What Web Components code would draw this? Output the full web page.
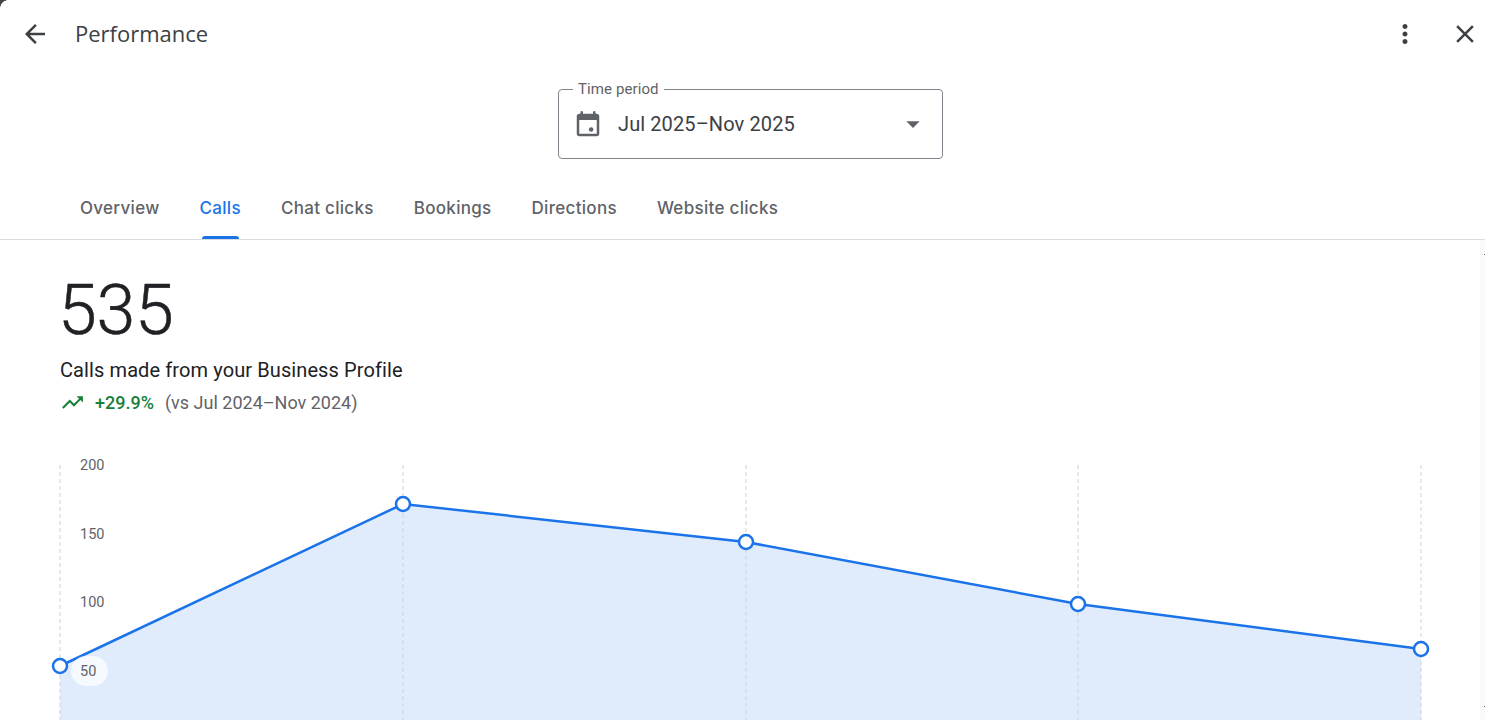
<!DOCTYPE html>
<html lang="en">
<head>
<meta charset="utf-8">
<title>Performance</title>
<style>
  html, body { margin: 0; padding: 0; background: #fff; overflow: hidden; height: 720px; }
  body { font-family: Roboto, "Liberation Sans", sans-serif; }
</style>
</head>
<body>
<perf-dialog>
  <perf-header title="Performance"></perf-header>
  <period-select label="Time period" value="Jul 2025–Nov 2025"></period-select>
  <perf-tabs>
    <perf-tab>Overview</perf-tab>
    <perf-tab active>Calls</perf-tab>
    <perf-tab>Chat clicks</perf-tab>
    <perf-tab>Bookings</perf-tab>
    <perf-tab>Directions</perf-tab>
    <perf-tab>Website clicks</perf-tab>
  </perf-tabs>
  <perf-summary value="535" caption="Calls made from your Business Profile" change="+29.9%" compare="(vs Jul 2024–Nov 2024)"></perf-summary>
  <perf-chart></perf-chart>
</perf-dialog>

<script>
'use strict';

class PerfDialog extends HTMLElement {
  connectedCallback() {
    this.attachShadow({mode: 'open'});
    this.shadowRoot.innerHTML = `
      <style>
        :host {
          display: flex;
          flex-direction: column;
          height: 720px;
          overflow: hidden;
          position: relative;
          background: #fff;
        }
        .corner {
          position: absolute;
          top: 0;
          left: 0;
          width: 8px;
          height: 8px;
          background: radial-gradient(circle at 8px 8px, transparent 7.5px, #444 8px);
        }
        .gutter {
          position: absolute;
          top: 240px;
          right: 0;
          bottom: 0;
          width: 5px;
          background: #fafafa;
        }
        .tick {
          position: absolute;
          right: 0;
          width: 1px;
          height: 1px;
          background: #5f6368;
        }
      </style>
      <slot></slot>
      <div class="corner"></div>
      <div class="gutter"></div>
      <div class="tick" style="top: 254px"></div>
      <div class="tick" style="top: 706px"></div>
    `;
  }
}

class PerfHeader extends HTMLElement {
  connectedCallback() {
    let title = this.getAttribute('title') || '';
    this.attachShadow({mode: 'open'});
    this.shadowRoot.innerHTML = `
      <style>
        :host {
          display: flex;
          align-items: center;
          height: 68px;
          padding: 0 5px 0 20px;
          color: #3c4043;
        }
        .title {
          margin: -2px 0 0 25px;
          font: 400 22px/28px "Open Sans", Roboto, sans-serif;
          flex: 1;
        }
        svg { display: block; fill: #3c4043; }
        .more { margin-right: 30px; }
      </style>
      <svg width="30" height="30" viewBox="0 0 24 24"><path d="M20 11H7.83l5.59-5.59L12 4l-8 8 8 8 1.41-1.41L7.83 13H20v-2z"/></svg>
      <div class="title">${title}</div>
      <svg class="more" width="30" height="30" viewBox="0 0 24 24"><path d="M12 8c1.1 0 2-.9 2-2s-.9-2-2-2-2 .9-2 2 .9 2 2 2zm0 2c-1.1 0-2 .9-2 2s.9 2 2 2 2-.9 2-2-.9-2-2-2zm0 6c-1.1 0-2 .9-2 2s.9 2 2 2 2-.9 2-2-.9-2-2-2z"/></svg>
      <svg width="30" height="30" viewBox="0 0 24 24"><path d="M19 6.41 17.59 5 12 10.59 6.41 5 5 6.41 10.59 12 5 17.59 6.41 19 12 13.41 17.59 19 19 17.59 13.41 12z"/></svg>
    `;
  }
}

class PeriodSelect extends HTMLElement {
  connectedCallback() {
    let label = this.getAttribute('label');
    let value = this.getAttribute('value');
    this.attachShadow({mode: 'open'});
    this.shadowRoot.innerHTML = `
      <style>
        :host {
          display: flex;
          justify-content: center;
          padding: 21px 0 31px 16px;
        }
        .box {
          position: relative;
          box-sizing: border-box;
          width: 385px;
          height: 70px;
          border: 1px solid #80868b;
          border-radius: 4px;
          display: flex;
          align-items: center;
          padding: 0 14px;
          color: #3c4043;
        }
        .label {
          position: absolute;
          top: -10px;
          left: 14px;
          padding: 0 5px;
          background: #fff;
          font: 400 15px/18px Roboto, sans-serif;
          letter-spacing: 0.1px;
          color: #5f6368;
        }
        .value {
          flex: 1;
          margin-left: 15px;
          font: 400 20px/24px Roboto, sans-serif;
          letter-spacing: 0.1px;
        }
        svg { display: block; fill: #5f6368; }
        .calendar { margin-top: 2px; }
        .caret { margin-right: -1px; }
      </style>
      <div class="box">
        <span class="label">${label}</span>
        <svg class="calendar" width="30" height="30" viewBox="0 0 24 24"><path d="M19 3h-1V1h-2v2H8V1H6v2H5c-1.11 0-2 .9-2 2v14c0 1.1.89 2 2 2h14c1.1 0 2-.9 2-2V5c0-1.1-.9-2-2-2zm0 16H5V8h14v11z"/><circle cx="14.5" cy="15.5" r="1.8"/><path d="M4 4h16v4H4z"/></svg>
        <span class="value">${value}</span>
        <svg class="caret" width="32" height="32" viewBox="0 0 24 24"><path d="M7 10l5 5 5-5z"/></svg>
      </div>
    `;
  }
}

class PerfTabs extends HTMLElement {
  connectedCallback() {
    this.attachShadow({mode: 'open'});
    this.shadowRoot.innerHTML = `
      <style>
        :host {
          display: flex;
          height: 50px;
          box-sizing: border-box;
          padding-left: 60px;
          border-bottom: 1px solid #dadce0;
          flex: none;
        }
      </style>
      <slot></slot>
    `;
  }
}

class PerfTab extends HTMLElement {
  connectedCallback() {
    let active = this.hasAttribute('active');
    this.attachShadow({mode: 'open'});
    this.shadowRoot.innerHTML = `
      <style>
        :host {
          display: flex;
          position: relative;
          justify-content: center;
          padding: 0 20px;
          font: 500 17px/24px Inter, Roboto, sans-serif;
          letter-spacing: 0.3px;
          color: ${active ? '#1a73e8' : '#5f6368'};
        }
        .text { margin-top: 6px; }
        .bar {
          position: absolute;
          left: 22px;
          right: 22px;
          bottom: 0;
          height: 3px;
          border-radius: 3px 3px 0 0;
          background: #1a73e8;
        }
      </style>
      <span class="text"><slot></slot></span>
      ${active ? '<span class="bar"></span>' : ''}
    `;
  }
}

class PerfSummary extends HTMLElement {
  connectedCallback() {
    this.attachShadow({mode: 'open'});
    this.shadowRoot.innerHTML = `
      <style>
        :host {
          display: block;
          padding: 28px 0 0 60px;
          color: #202124;
          font-family: Roboto, sans-serif;
        }
        .value {
          font-size: 70px;
          line-height: 84px;
          font-weight: 300;
          margin-left: -2px;
          letter-spacing: -0.3px;
          -webkit-text-stroke: 0.5px #202124;
        }
        .caption { margin-top: 4px; font-size: 20px; line-height: 28px; letter-spacing: 0.1px; }
        .trend {
          display: flex;
          align-items: center;
          margin-top: 6px;
          font-size: 18px;
          line-height: 24px;
          color: #5f6368;
        }
        svg { display: block; fill: #188038; margin-right: 10px; }
        .change { color: #188038; font-weight: 500; margin-right: 11px; }
      </style>
      <div class="value">${this.getAttribute('value')}</div>
      <div class="caption">${this.getAttribute('caption')}</div>
      <div class="trend">
        <svg width="25" height="25" viewBox="0 0 24 24"><path d="M16 6l2.29 2.29-4.88 4.88-4-4L2 16.59 3.41 18l6-6 4 4 6.3-6.29L22 12V6z"/></svg>
        <span class="change">${this.getAttribute('change')}</span>
        <span>${this.getAttribute('compare')}</span>
      </div>
    `;
  }
}

class PerfChart extends HTMLElement {
  connectedCallback() {
    let points = [[60, 666], [403, 504], [746, 542], [1078, 604], [1421, 649]];
    let line = points.map(p => p.join(',')).join(' ');
    let area = `60,720 ${line} 1421,720`;
    let guides = points.map(p =>
      `<line x1="${p[0]}" y1="465" x2="${p[0]}" y2="720" stroke="#d0d2d8" stroke-dasharray="4 3"/>`).join('');
    let dots = points.map(p =>
      `<circle cx="${p[0]}" cy="${p[1]}" r="7" fill="#fff" stroke="#1a73e8" stroke-width="2.5"/>`).join('');
    let labels = [['200', 465], ['150', 534], ['100', 602], ['50', 671]].map(l =>
      `<text x="80" y="${l[1]}" dominant-baseline="central">${l[0]}</text>`).join('');

    this.attachShadow({mode: 'open'});
    this.shadowRoot.innerHTML = `
      <style>
        :host {
          position: absolute;
          left: 0;
          top: 0;
          width: 1485px;
          height: 720px;
          pointer-events: none;
        }
        svg { display: block; }
        text { font: 400 14.5px Roboto, sans-serif; fill: #5f6368; }
      </style>
      <svg width="1485" height="720" viewBox="0 0 1485 720">
        <polygon points="${area}" fill="#e0ecfc"/>
        ${guides}
        <polyline points="${line}" fill="none" stroke="#1a73e8" stroke-width="2.5"/>
        <rect x="71" y="656" width="37" height="30" rx="15" fill="#fff" fill-opacity=".7"/>
        ${labels}
        ${dots}
      </svg>
    `;
  }
}

customElements.define('perf-dialog', PerfDialog);
customElements.define('perf-header', PerfHeader);
customElements.define('period-select', PeriodSelect);
customElements.define('perf-tabs', PerfTabs);
customElements.define('perf-tab', PerfTab);
customElements.define('perf-summary', PerfSummary);
customElements.define('perf-chart', PerfChart);
</script>
</body>
</html>
